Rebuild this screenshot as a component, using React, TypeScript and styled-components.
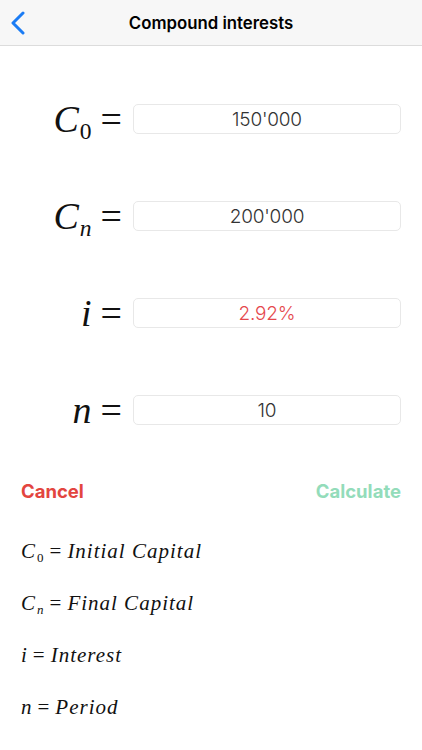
import React from 'react'
import styled, { createGlobalStyle } from 'styled-components'

const GlobalStyle = createGlobalStyle`
  html, body {
    margin: 0;
    padding: 0;
    background: #ffffff;
  }
  body {
    font-family: Inter, "Noto Sans", sans-serif;
  }
`

const Screen = styled.div`
  width: 422px;
  height: 750px;
  display: flex;
  flex-direction: column;
  background: #ffffff;
  overflow: hidden;
`

const NavBar = styled.div`
  height: 45px;
  flex: none;
  display: grid;
  grid-template-columns: 60px 1fr 60px;
  align-items: center;
  background: #f7f7f7;
  border-bottom: 1px solid #dcdcdc;
`

const BackButton = styled.button`
  border: none;
  background: transparent;
  padding: 0 0 0 10px;
  height: 45px;
  display: flex;
  align-items: center;
  cursor: pointer;
`

const Title = styled.h1`
  margin: 0;
  text-align: center;
  font-family: Inter, sans-serif;
  font-size: 16.8px;
  font-weight: 600;
  color: #000000;
`

const Form = styled.div`
  display: flex;
  flex-direction: column;
  gap: 67px;
  padding: 54px 21px 0 0;
`

const Row = styled.div`
  display: grid;
  grid-template-columns: 122px 1fr;
  column-gap: 11px;
  align-items: center;
  height: 30px;
`

const Label = styled.div`
  text-align: right;
  font-family: "Liberation Serif", serif;
  font-size: 38px;
  color: #111111;
  white-space: nowrap;
  line-height: 1;
`

const Var = styled.i`
  font-style: italic;
`

const Sub = styled.sub<{ $italic?: boolean }>`
  font-size: 0.62em;
  line-height: 0;
  vertical-align: -0.3em;
  margin-left: 1px;
  font-style: ${({ $italic }) => ($italic ? 'italic' : 'normal')};
`

const Eq = styled.span`
  margin-left: 9px;
`

const Field = styled.div<{ $danger?: boolean }>`
  height: 30px;
  box-sizing: border-box;
  border: 1px solid #e8e8e8;
  border-radius: 5px;
  display: flex;
  align-items: center;
  justify-content: center;
  font-family: Inter, sans-serif;
  font-weight: 300;
  font-size: 19px;
  letter-spacing: -0.2px;
  color: ${({ $danger }) => ($danger ? '#e5484d' : '#333333')};
`

const Actions = styled.div`
  display: flex;
  justify-content: space-between;
  align-items: center;
  padding: 59px 21px 0 21px;
`

const ActionButton = styled.button<{ $color: string }>`
  border: none;
  background: transparent;
  padding: 0;
  font-family: Inter, sans-serif;
  font-weight: 700;
  font-size: 18.5px;
  color: ${({ $color }) => $color};
  cursor: pointer;
`

const Legend = styled.div`
  display: flex;
  flex-direction: column;
  gap: 28px;
  padding: 37px 21px 0 21px;
`

const LegendLine = styled.div`
  font-family: "Liberation Serif", serif;
  font-size: 21px;
  letter-spacing: 1px;
  line-height: 24px;
  color: #111111;
  white-space: nowrap;
`

const LegendEq = styled.span`
  margin: 0 5px;
`

const ChevronLeft = () => (
  <svg width="16" height="24" viewBox="0 0 16 24" fill="none">
    <path d="M13 2 L3 12 L13 22" stroke="#1b7cf4" strokeWidth="3" strokeLinecap="round" strokeLinejoin="round" />
  </svg>
)

type FieldDef = {
  name: string
  sub?: string
  subItalic?: boolean
  value: string
  danger?: boolean
}

const fields: FieldDef[] = [
  { name: 'C', sub: '0', value: "150'000" },
  { name: 'C', sub: 'n', subItalic: true, value: "200'000" },
  { name: 'i', value: '2.92%', danger: true },
  { name: 'n', value: '10' },
]

const legend = [
  { name: 'C', sub: '0', text: 'Initial Capital' },
  { name: 'C', sub: 'n', subItalic: true, text: 'Final Capital' },
  { name: 'i', text: 'Interest' },
  { name: 'n', text: 'Period' },
]

export default function App() {
  return (
    <>
      <GlobalStyle />
      <Screen>
        <NavBar>
          <BackButton aria-label="Back">
            <ChevronLeft />
          </BackButton>
          <Title>Compound interests</Title>
          <span />
        </NavBar>

        <Form>
          {fields.map((f) => (
            <Row key={f.name + (f.sub || '')}>
              <Label>
                <Var>{f.name}</Var>
                {f.sub && <Sub $italic={f.subItalic}>{f.sub}</Sub>}
                <Eq>=</Eq>
              </Label>
              <Field $danger={f.danger}>{f.value}</Field>
            </Row>
          ))}
        </Form>

        <Actions>
          <ActionButton $color="#e3453f">Cancel</ActionButton>
          <ActionButton $color="#93dcba">Calculate</ActionButton>
        </Actions>

        <Legend>
          {legend.map((l) => (
            <LegendLine key={l.text}>
              <Var>{l.name}</Var>
              {l.sub && <Sub $italic={l.subItalic}>{l.sub}</Sub>}
              <LegendEq>=</LegendEq>
              <Var>{l.text}</Var>
            </LegendLine>
          ))}
        </Legend>
      </Screen>
    </>
  )
}
